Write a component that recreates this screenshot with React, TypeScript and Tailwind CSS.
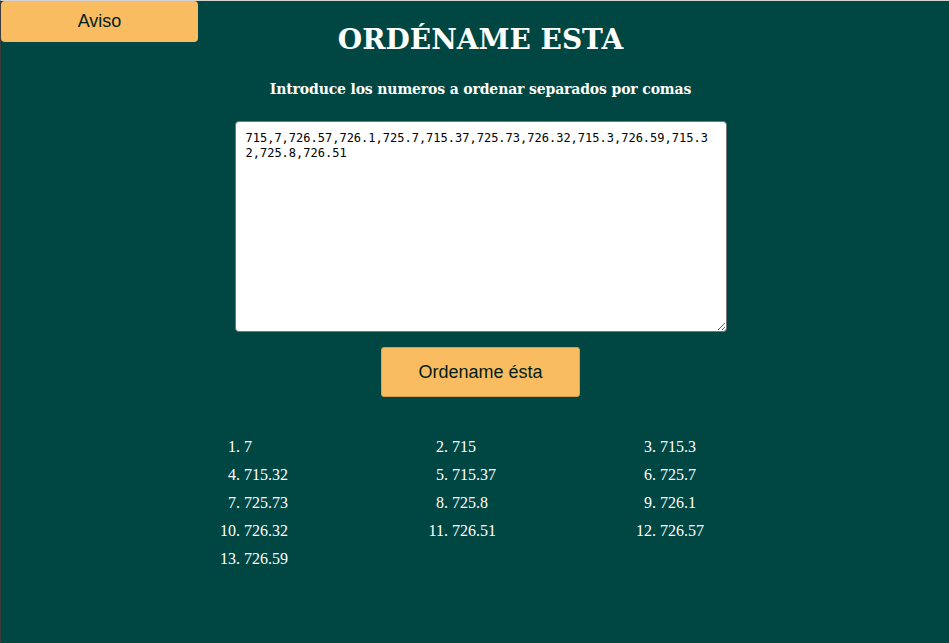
import React from 'react';

const numbers = [7, 715, 715.3, 715.32, 715.37, 725.7, 725.73, 725.8, 726.1, 726.32, 726.51, 726.57, 726.59];
const input = '715,7,726.57,726.1,725.7,715.37,725.73,726.32,715.3,726.59,715.32,725.8,726.51';

const App: React.FC = () => {
  return (
    <div className="relative min-h-screen bg-[#004643] border-t border-t-[#d4d4d4] border-l border-l-[#3c3c3c] text-[#fffffe]">
      <button className="absolute left-0 top-0 w-[197px] h-[41px] bg-[#f9bc60] text-[#001e1d] rounded-[4px] text-[18px] font-['Liberation_Sans',Arial,sans-serif]">
        Aviso
      </button>

      <div className="flex flex-col items-center pl-[11px]">
        <h1 className="mt-[19px] leading-[40px] text-[28px] font-bold font-['DejaVu_Serif',serif]">
          ORDÉNAME ESTA
        </h1>
        <p className="mt-[19px] leading-[20px] text-[14px] font-bold font-['DejaVu_Serif',serif] tracking-[-0.15px]">
          Introduce los numeros a ordenar separados por comas
        </p>
        <textarea
          className="mt-[22px] w-[492px] h-[211px] bg-white text-black border border-[#767676] rounded-[4px] pt-[9px] pl-[10px] pr-[16px] text-[12px] leading-[15px] font-['DejaVu_Sans_Mono',monospace] outline-none"
          defaultValue={input}
        />
        <button className="mt-[15px] w-[199px] h-[50px] bg-[#f9bc60] border border-[#d9a14f] rounded-[3px] text-[#001e1d] text-[18px] font-['Liberation_Sans',Arial,sans-serif]">
          Ordename ésta
        </button>
      </div>

      <ol className="ml-[243px] mt-[36px] w-[624px] grid grid-cols-3 list-decimal list-outside text-[16px] leading-[28px] font-['Liberation_Serif','Times_New_Roman',serif]">
        {numbers.map((n, i) => (
          <li key={i}>{n}</li>
        ))}
      </ol>
    </div>
  );
};

export default App;
